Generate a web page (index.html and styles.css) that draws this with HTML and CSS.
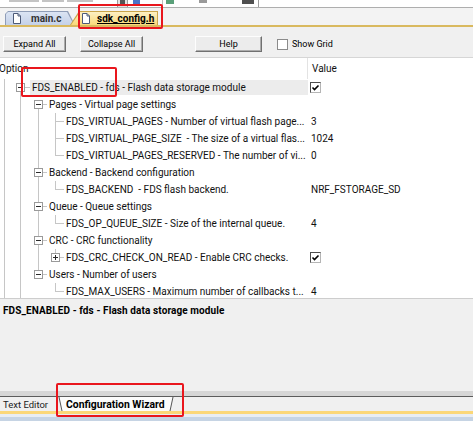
FILE: index.html
```html
<!DOCTYPE html>
<html>
<head>
<meta charset="utf-8">
<title>sdk_config.h - Configuration Wizard</title>
<link rel="stylesheet" href="styles.css">
</head>
<body>
<div class="app">
  <div class="topstrip">
    <div class="field"><i class="ghost g1"></i><i class="ghost g2"></i><i class="ghost g3"></i></div>
    <div class="mini-btn"><i></i></div>
    <div class="mini-blue"></div>
    <div class="vsep"></div>
    <div class="mini-green"></div>
    <div class="mini-gray"></div>
    <div class="mini-box"><i></i></div>
  </div>

  <div class="tabbar">
    <div class="tab tab-main">
      <div class="tab-inner">
        <svg class="tab-icon" width="8" height="11" viewBox="0 0 8 11"><path d="M0.5 0.5H5L7.5 3V10.5H0.5Z" fill="#fff" stroke="#4d5b78"/><path d="M5 0.5V3H7.5" fill="none" stroke="#4d5b78"/></svg>
        <span>main.c</span>
      </div>
    </div>
    <div class="tab tab-sdk">
      <div class="tab-inner">
        <svg class="tab-icon" width="8" height="11" viewBox="0 0 8 11"><path d="M0.5 0.5H5L7.5 3V10.5H0.5Z" fill="#fff" stroke="#4d5b78"/><path d="M5 0.5V3H7.5" fill="none" stroke="#4d5b78"/></svg>
        <span class="tab-name">sdk_config.h</span>
      </div>
    </div>
  </div>

  <div class="toolbar">
    <button class="btn btn-expand">Expand All</button>
    <button class="btn btn-collapse">Collapse All</button>
    <button class="btn btn-help">Help</button>
    <label class="grid-toggle"><span class="cb"></span><span>Show Grid</span></label>
  </div>

  <div class="grid">
    <div class="header">
      <div class="h-opt"><span>Option</span></div>
      <div class="h-val">Value</div>
    </div>
    <div class="rows">
      <div class="row lv0 sel">
        <div class="opt"><span class="exp"></span><span class="label">FDS_ENABLED - fds - Flash data storage module</span></div>
        <div class="val"><span class="check"><svg width="9" height="9" viewBox="0 0 9 9"><path d="M1.5 4.5 3.5 6.5 7.5 2.5" fill="none" stroke="#000" stroke-width="1.6"/></svg></span></div>
      </div>
      <div class="row lv1">
        <div class="opt"><span class="exp"></span><span class="label">Pages - Virtual page settings</span></div>
        <div class="val"></div>
      </div>
      <div class="row lv2">
        <div class="opt"><span class="label">FDS_VIRTUAL_PAGES - Number of virtual flash page...</span></div>
        <div class="val">3</div>
      </div>
      <div class="row lv2">
        <div class="opt"><span class="label">FDS_VIRTUAL_PAGE_SIZE  - The size of a virtual flas...</span></div>
        <div class="val">1024</div>
      </div>
      <div class="row lv2 last">
        <div class="opt"><span class="label">FDS_VIRTUAL_PAGES_RESERVED - The number of vi...</span></div>
        <div class="val">0</div>
      </div>
      <div class="row lv1">
        <div class="opt"><span class="exp"></span><span class="label">Backend - Backend configuration</span></div>
        <div class="val"></div>
      </div>
      <div class="row lv2 last">
        <div class="opt"><span class="label">FDS_BACKEND  - FDS flash backend.</span></div>
        <div class="val">NRF_FSTORAGE_SD</div>
      </div>
      <div class="row lv1">
        <div class="opt"><span class="exp"></span><span class="label">Queue - Queue settings</span></div>
        <div class="val"></div>
      </div>
      <div class="row lv2 last">
        <div class="opt"><span class="label">FDS_OP_QUEUE_SIZE - Size of the internal queue.</span></div>
        <div class="val">4</div>
      </div>
      <div class="row lv1">
        <div class="opt"><span class="exp"></span><span class="label">CRC - CRC functionality</span></div>
        <div class="val"></div>
      </div>
      <div class="row lv2x">
        <div class="opt"><span class="exp plus"></span><span class="label">FDS_CRC_CHECK_ON_READ - Enable CRC checks.</span></div>
        <div class="val"><span class="check"><svg width="9" height="9" viewBox="0 0 9 9"><path d="M1.5 4.5 3.5 6.5 7.5 2.5" fill="none" stroke="#000" stroke-width="1.6"/></svg></span></div>
      </div>
      <div class="row lv1">
        <div class="opt"><span class="exp"></span><span class="label">Users - Number of users</span></div>
        <div class="val"></div>
      </div>
      <div class="row lv2 last">
        <div class="opt"><span class="label">FDS_MAX_USERS - Maximum number of callbacks t...</span></div>
        <div class="val">4</div>
      </div>
    </div>
  </div>

  <div class="desc">FDS_ENABLED - fds - Flash data storage module</div>

  <div class="band"></div>
  <div class="btabs">
    <div class="btab-text">Text Editor</div>
    <div class="btab-active">
      <svg class="cap" width="5" height="14" viewBox="0 0 5 14"><polygon points="1,0 5,0 5,14 4,14" fill="#fbfbfb"/><line x1="1" y1="0" x2="4" y2="14" stroke="#555" stroke-width="1"/></svg>
      <span class="btab-label">Configuration Wizard</span>
      <svg class="cap" width="7" height="14" viewBox="0 0 7 14"><polygon points="0,0 6,0 3,14 0,14" fill="#fbfbfb"/><line x1="6" y1="0" x2="3" y2="14" stroke="#555" stroke-width="1"/></svg>
    </div>
  </div>
  <div class="y1"></div>
  <div class="y2"></div>
  <div class="y3"></div>

  <div class="mark m1"></div>
  <div class="mark m2"></div>
  <div class="mark m3"></div>
</div>
</body>
</html>
```
FILE: styles.css
```css
* { box-sizing: border-box; }
html, body { margin: 0; padding: 0; }
body {
  width: 473px;
  height: 421px;
  overflow: hidden;
  background: #f0f0f0;
  font-family: Roboto, "Liberation Sans", Arial, sans-serif;
  font-size: 10px;
  color: #111;
}
.app {
  position: relative;
  width: 473px;
  height: 421px;
  overflow: hidden;
  display: flex;
  flex-direction: column;
}

/* top strip (previous window, cut off) */
.topstrip {
  height: 8px;
  flex: none;
  background: #fff;
  border-bottom: 1px solid #aeaeae;
  display: flex;
  align-items: flex-start;
  overflow: hidden;
}
.field {
  width: 118px;
  height: 7px;
  border-right: 1px solid #9c9c9c;
  overflow: hidden;
  padding-left: 9px;
  display: flex;
  align-items: flex-start;
  gap: 3px;
}
.ghost { display: block; height: 2px; background: #c4c4c4; }
.g1 { width: 30px; }
.g2 { width: 22px; }
.g3 { width: 26px; }
.mini-btn {
  width: 10px;
  height: 7px;
  background: #e3e3e3;
  border-right: 1px solid #9c9c9c;
  display: flex;
  justify-content: center;
}
.mini-btn i { display: block; width: 5px; height: 4px; background: #555; }
.mini-blue { width: 7px; height: 5px; margin-left: 5px; background: #4a74c9; }
.vsep { width: 1px; height: 7px; background: #bdbdbd; margin-left: 22px; }
.mini-green { width: 8px; height: 4px; margin-left: 3px; background: #5aa07a; }
.mini-gray { width: 8px; height: 3px; margin-left: 25px; background: #9a9a9a; }
.mini-box {
  width: 30px;
  height: 7px;
  margin-left: 22px;
  border-right: 1px solid #9c9c9c;
  display: flex;
  justify-content: flex-end;
  padding-right: 4px;
}
.mini-box i { display: block; width: 12px; height: 4px; background: #4f4f4f; }

/* file tabs */
.tabbar {
  height: 19px;
  flex: none;
  display: flex;
  align-items: flex-end;
  padding-left: 5px;
  background: #f3f3f3;
  border-bottom: 2px solid #d9b95f;
}
.tab {
  height: 14px;
  padding: 1px 1px 0 1px;
  flex: none;
}
.tab-inner {
  height: 100%;
  display: flex;
  align-items: center;
  font-weight: bold;
  white-space: nowrap;
}
.tab-main {
  width: 70px;
  background: #8f9db7;
  clip-path: polygon(0 100%, 0 3px, 3px 0, calc(100% - 7px) 0, 100% 100%);
}
.tab-main .tab-inner {
  background: linear-gradient(#dbe4f3, #c4d1e8);
  clip-path: polygon(0 100%, 0 2px, 2px 0, calc(100% - 7px) 0, 100% 100%);
  padding-left: 7px;
  color: #333;
}
.tab-sdk {
  width: 88px;
  margin-left: -5px;
  background: #caa54a;
  clip-path: polygon(0 100%, 9px 0, 100% 0, 100% 100%);
}
.tab-sdk .tab-inner {
  background: linear-gradient(#fdf0c2, #f9d979);
  clip-path: polygon(0 100%, 9px 0, 100% 0, 100% 100%);
  padding-left: 11px;
  color: #000;
}
.tab-icon { flex: none; display: block; }
.tab-main .tab-icon { margin-right: 10px; }
.tab-sdk .tab-icon { margin-right: 7px; }
.tab-name { text-decoration: underline; }

/* toolbar */
.toolbar {
  height: 31px;
  flex: none;
  display: flex;
  align-items: flex-start;
  padding-top: 9px;
  border-bottom: 1px solid #d6d6d6;
  background: #f0f0f0;
  font-size: 9px;
}
.btn {
  height: 16px;
  padding: 0;
  font: inherit;
  font-size: 9px;
  color: #000;
  background: #ececec;
  border: 1px solid;
  border-color: #fdfdfd #707070 #707070 #fdfdfd;
  box-shadow: inset -1px -1px 0 #acacac;
  line-height: 13px;
}
.btn-expand { margin-left: 3px; width: 63px; }
.btn-collapse { margin-left: 14px; width: 63px; }
.btn-help { margin-left: 52px; width: 67px; }
.grid-toggle {
  margin-left: 15px;
  height: 16px;
  display: flex;
  align-items: center;
  gap: 4px;
  color: #000;
}
.cb {
  width: 11px;
  height: 11px;
  background: #fff;
  border: 1px solid #8b8b8b;
}

/* option grid */
.grid {
  height: 240px;
  flex: none;
  background: #fff;
  overflow: hidden;
}
.header {
  height: 21px;
  display: flex;
}
.h-opt {
  width: 308px;
  flex: none;
  border-right: 1px solid #e3e3e3;
  display: flex;
  align-items: center;
}
.h-opt span { margin-left: -1px; }
.h-val {
  display: flex;
  align-items: center;
  padding-left: 4px;
}
.rows {
  background-image:
    linear-gradient(#c6c6c6, #c6c6c6),
    linear-gradient(#c6c6c6, #c6c6c6),
    linear-gradient(#c6c6c6, #c6c6c6);
  background-position: 4px 0, 20px 13px, 38px 30px;
  background-size: 1px 100%, 1px 100%, 1px 165px;
  background-repeat: no-repeat;
}
.row {
  height: 17px;
  display: flex;
  align-items: center;
  background-repeat: no-repeat;
}
.opt {
  width: 308px;
  height: 17px;
  flex: none;
  display: flex;
  align-items: center;
}
.exp {
  flex: none;
  width: 9px;
  height: 9px;
  border: 1px solid #9a9a9a;
  background: linear-gradient(#2b2b2b, #2b2b2b) center / 5px 1px no-repeat, #fff;
  margin-right: 5px;
}
.exp.plus {
  background:
    linear-gradient(#2b2b2b, #2b2b2b) center / 5px 1px no-repeat,
    linear-gradient(#2b2b2b, #2b2b2b) center / 1px 5px no-repeat,
    #fff;
}
.label {
  flex: 1;
  min-width: 0;
  white-space: pre;
  overflow: hidden;
  padding-left: 2px;
  line-height: 15px;
}
.sel .label { background: #ececec; }

.lv0 .opt { padding-left: 16px; }
.lv1 .opt { padding-left: 34px; }
.lv1 .exp { margin-right: 4px; }
.lv2 .opt { padding-left: 64px; }
.lv2x .opt { padding-left: 51px; }
.lv2x .exp { margin-right: 4px; }

.lv0 {
  background-image: linear-gradient(#c6c6c6, #c6c6c6);
  background-position: 25px 8px;
  background-size: 5px 1px;
}
.lv1 {
  background-image: linear-gradient(#c6c6c6, #c6c6c6);
  background-position: 43px 8px;
  background-size: 4px 1px;
}
.lv2 {
  background-image: linear-gradient(#c6c6c6, #c6c6c6), linear-gradient(#c6c6c6, #c6c6c6);
  background-position: 55px 0, 55px 8px;
  background-size: 1px 100%, 9px 1px;
}
.lv2.last { background-size: 1px 9px, 9px 1px; }
.lv2x {
  background-image: linear-gradient(#c6c6c6, #c6c6c6), linear-gradient(#c6c6c6, #c6c6c6);
  background-position: 55px 0, 60px 8px;
  background-size: 1px 4px, 4px 1px;
}

.val {
  padding-left: 3px;
  white-space: nowrap;
  display: flex;
  align-items: center;
}
.check {
  margin-left: -1px;
  width: 11px;
  height: 11px;
  border: 1px solid;
  border-color: #4d4d4d #b5b5b5 #b5b5b5 #4d4d4d;
  background: #fff;
  display: flex;
  align-items: center;
  justify-content: center;
}
.check svg { display: block; }

/* description */
.desc {
  flex: none;
  height: 93px;
  border-top: 1px solid #cdcdcd;
  padding: 6px 0 0 3px;
  font-weight: bold;
  letter-spacing: 0.1px;
  line-height: 12px;
  color: #000;
}

/* bottom tabs */
.band { height: 5px; flex: none; background: #d6d6d6; }
.btabs {
  height: 15px;
  flex: none;
  border-top: 1px solid #5c5c5c;
  display: flex;
  align-items: stretch;
  background: #f0f0f0;
}
.btab-text {
  width: 58px;
  padding-left: 3px;
  display: flex;
  align-items: center;
  font-size: 9.5px;
  color: #222;
}
.btab-active { display: flex; }
.cap { display: block; flex: none; }
.btab-label {
  width: 104px;
  background: #fbfbfb;
  display: flex;
  align-items: center;
  padding-left: 3px;
  font-size: 10.4px;
  font-weight: bold;
  color: #000;
  white-space: nowrap;
}
.y1 { height: 3px; flex: none; background: #fbd778; }
.y2 { height: 3px; flex: none; background: #e9edf2; }
.y3 { height: 4px; flex: none; background: #c6d4e4; }

/* red annotation rectangles */
.mark {
  position: absolute;
  border: 2px solid #e9161d;
  border-radius: 2px;
  pointer-events: none;
}
.m1 { left: 78px; top: 4px; width: 85px; height: 25px; }
.m2 { left: 21px; top: 67px; width: 96px; height: 30px; }
.m3 { left: 56px; top: 383px; width: 128px; height: 34px; }
```
